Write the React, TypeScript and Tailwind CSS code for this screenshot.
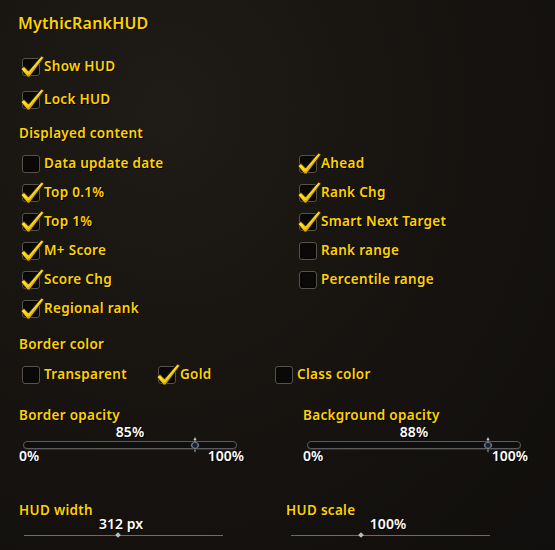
import React from 'react'

const gold = 'text-[#ffd100]'
const shadow = '[text-shadow:1px_1px_0_#000]'

function Check() {
  return (
    <svg className="absolute -left-[3px] -top-[4px] pointer-events-none" width="26" height="24" viewBox="0 0 26 24">
      <defs>
        <linearGradient id="chk" x1="0" y1="0" x2="1" y2="1">
          <stop offset="0" stopColor="#fff27a" />
          <stop offset="0.45" stopColor="#ffd200" />
          <stop offset="1" stopColor="#8a6400" />
        </linearGradient>
      </defs>
      <path
        d="M1 14 L4 11.5 L8.5 16 L21.5 1 L24 2.5 L9.5 22 L7.5 22 Z"
        fill="url(#chk)"
        stroke="#2a1c00"
        strokeWidth="0.8"
        strokeLinejoin="round"
      />
      <path d="M3 13.5 L8.5 19 L21.5 2.5" fill="none" stroke="#fff8b0" strokeWidth="0.8" opacity="0.7" />
    </svg>
  )
}

function Box({ checked }: { checked?: boolean }) {
  return (
    <div className="relative w-[18px] h-[18px] shrink-0 rounded-[3px] border border-[#57534d] bg-[#0a0908] shadow-[inset_0_0_2px_#000]">
      {checked && <Check />}
    </div>
  )
}

function Option({ label, checked, className = '' }: { label: string; checked?: boolean; className?: string }) {
  return (
    <div className={`flex items-center h-[29px] gap-[4px] ${className}`}>
      <Box checked={checked} />
      <span className={`${gold} ${shadow} text-[13.5px] font-semibold tracking-[0.3px]`}>{label}</span>
    </div>
  )
}

function Heading({ children, className = '' }: { children: React.ReactNode; className?: string }) {
  return <div className={`${gold} ${shadow} text-[13.5px] font-semibold tracking-[0.3px] ${className}`}>{children}</div>
}

function Thumb() {
  return (
    <svg width="10" height="16" viewBox="0 0 10 16">
      <path d="M5 0 L6.5 3 L5 4 L3.5 3 Z" fill="#c9c9c9" />
      <path d="M5 3.5 L9 7 L9 9.5 L5 13 L1 9.5 L1 7 Z" fill="#9a9a9a" stroke="#2a2a2a" strokeWidth="0.6" />
      <circle cx="5" cy="8.3" r="3" fill="#16203a" stroke="#6d7590" strokeWidth="0.8" />
      <path d="M4 13 L6 13 L5 16 Z" fill="#8a8a8a" />
    </svg>
  )
}

function OpacitySlider({ label, value, pos }: { label: string; value: string; pos: number }) {
  return (
    <div className="w-[222px]">
      <Heading className="h-[15px] leading-[15px]">{label}</Heading>
      <div className={`text-center text-white ${shadow} text-[14px] font-semibold h-[14px] leading-[14px] mt-[2px]`}>{value}</div>
      <div className="relative mx-[4px] mt-[2px] h-[8px] rounded-full border border-[#5b5b5b] bg-[#0e0e0e] shadow-[0_1px_0_#2e2e2e]">
        <div className="absolute top-[-5px]" style={{ left: `${pos}%`, transform: 'translateX(-50%)' }}>
          <Thumb />
        </div>
      </div>
      <div className={`flex justify-between text-white ${shadow} text-[14px] font-semibold h-[14px] leading-[14px]`}>
        <span>0%</span>
        <span className="-mr-[3px]">100%</span>
      </div>
    </div>
  )
}

function LineSlider({ label, value, pos, width }: { label: string; value: string; pos: number; width: number }) {
  return (
    <div>
      <Heading className="h-[16px] leading-[16px]">{label}</Heading>
      <div className="relative" style={{ width }}>
        <div className={`text-center text-white ${shadow} text-[14px] font-semibold h-[14px] leading-[14px] mt-[-1px]`}>{value}</div>
        <div className="relative ml-[5px] mt-[4px] h-px bg-[#6c6c6c]">
          <div
            className="absolute top-[-2px] w-[4px] h-[4px] bg-[#bdbdbd]"
            style={{ left: `${pos}%`, transform: 'translateX(-50%) rotate(45deg)' }}
          />
        </div>
      </div>
    </div>
  )
}

export default function App() {
  return (
    <div
      className="w-[555px] h-[550px] overflow-hidden bg-[#171411] bg-[radial-gradient(ellipse_at_30%_20%,#1f1b16_0%,#15120f_60%,#110f0d_100%)] pl-[19px] pt-[12px]"
      style={{ fontFamily: '"Noto Sans", "DejaVu Sans", sans-serif' }}
    >
      <div className={`${gold} ${shadow} text-[16px] font-semibold h-[22px] leading-[22px] -ml-[1px] tracking-[0.2px]`}>MythicRankHUD</div>

      <div className="mt-[16px] pl-[3px]">
        <Option label="Show HUD" checked className="h-[33px]" />
        <Option label="Lock HUD" checked className="h-[33px]" />
      </div>

      <Heading className="mt-[7px] h-[20px] leading-[20px]">Displayed content</Heading>

      <div className="flex mt-[6px] pl-[3px]">
        <div className="w-[277px]">
          <Option label="Data update date" />
          <Option label="Top 0.1%" checked />
          <Option label="Top 1%" checked />
          <Option label="M+ Score" checked />
          <Option label="Score Chg" checked />
          <Option label="Regional rank" checked className="h-[28px]" />
        </div>
        <div>
          <Option label="Ahead" checked />
          <Option label="Rank Chg" checked />
          <Option label="Smart Next Target" checked />
          <Option label="Rank range" />
          <Option label="Percentile range" />
        </div>
      </div>

      <Heading className="mt-[11px] h-[20px] leading-[20px]">Border color</Heading>

      <div className="flex pl-[3px] mt-[6px]">
        <Option label="Transparent" className="w-[136px]" />
        <Option label="Gold" checked className="w-[117px]" />
        <Option label="Class color" />
      </div>

      <div className="flex mt-[19px]">
        <div className="w-[284px]">
          <OpacitySlider label="Border opacity" value="85%" pos={80.5} />
        </div>
        <OpacitySlider label="Background opacity" value="88%" pos={85} />
      </div>

      <div className="flex mt-[39px]">
        <div className="w-[267px]">
          <LineSlider label="HUD width" value="312 px" pos={47} width={204} />
        </div>
        <LineSlider label="HUD scale" value="100%" pos={35} width={204} />
      </div>
    </div>
  )
}
